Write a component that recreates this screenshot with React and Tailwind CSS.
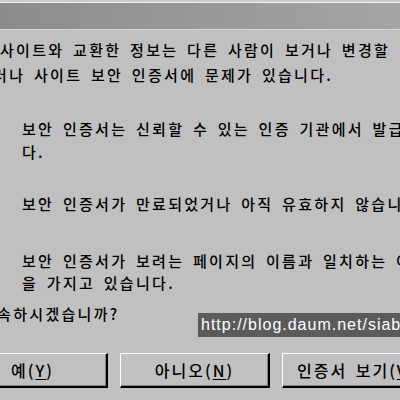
function Accel({ before, letter, after }) {
  return (
    <span>
      {before}(<span className="underline underline-offset-2">{letter}</span>){after}
    </span>
  );
}

function WinButton({ children }) {
  return (
    <div className="shrink-0 w-[150px] h-[35px] bg-[#c0c0c0] border-t border-l border-t-white border-l-white border-r-2 border-b-2 border-r-black border-b-black shadow-[inset_-1px_-1px_0_#808080] flex items-center justify-center">
      {children}
    </div>
  );
}

export default function App() {
  const line = "whitespace-nowrap";
  return (
    <div className="relative w-[400px] h-[400px] overflow-hidden bg-[#c0c0c0] text-black text-[15px] font-medium tracking-[2.3px] [word-spacing:3px] font-['Noto_Sans_CJK_KR','Noto_Sans',sans-serif]">
      {/* title bar */}
      <div className="h-[2px] bg-[#cbcbcb]" />
      <div className="h-[1px] bg-[#f2f2f2]" />
      <div className="h-[26px] bg-gradient-to-r from-[#8c8c8c] to-[#a5a5a5]" />
      <div className="h-[1px] bg-[#d6d6d6]" />

      {/* message */}
      <div className="mt-[7px] leading-[25px]">
        <div className={line}>사이트와 교환한 정보는 다른 사람이 보거나 변경할</div>
        <div className={`${line} ml-[-23px]`}>그러나 사이트 보안 인증서에 문제가 있습니다.</div>
      </div>

      <div className="pl-[22px]">
        <div className="mt-[30px] leading-[23px]">
          <div className={line}>보안 인증서는 신뢰할 수 있는 인증 기관에서 발급한 것이</div>
          <div className={line}>다.</div>
        </div>
        <div className="mt-[29px] leading-[23px]">
          <div className={line}>보안 인증서가 만료되었거나 아직 유효하지 않습니다.</div>
        </div>
        <div className="mt-[35px] leading-[22px]">
          <div className={line}>보안 인증서가 보려는 페이지의 이름과 일치하는 이름</div>
          <div className={line}>을 가지고 있습니다.</div>
        </div>
      </div>

      <div className={`${line} mt-[9px] leading-[22px] ml-[-19px]`}>계속하시겠습니까?</div>

      {/* buttons */}
      <div className="mt-[28px] ml-[-42px] flex gap-[12px] text-[16px] tracking-[2px]">
        <WinButton>
          <Accel before="예" letter="Y" />
        </WinButton>
        <WinButton>
          <Accel before="아니오" letter="N" />
        </WinButton>
        <WinButton>
          <Accel before="인증서 보기" letter="V" />
        </WinButton>
      </div>

      {/* watermark */}
      <div className="absolute left-[198px] top-[313px] w-[210px] h-[24px] bg-[#5b5b5b] text-white flex items-center pl-[3px] whitespace-nowrap tracking-[1px] [word-spacing:0px] text-[16px] font-normal font-['Liberation_Sans',sans-serif]">
        http://blog.daum.net/siablog
      </div>
    </div>
  );
}
